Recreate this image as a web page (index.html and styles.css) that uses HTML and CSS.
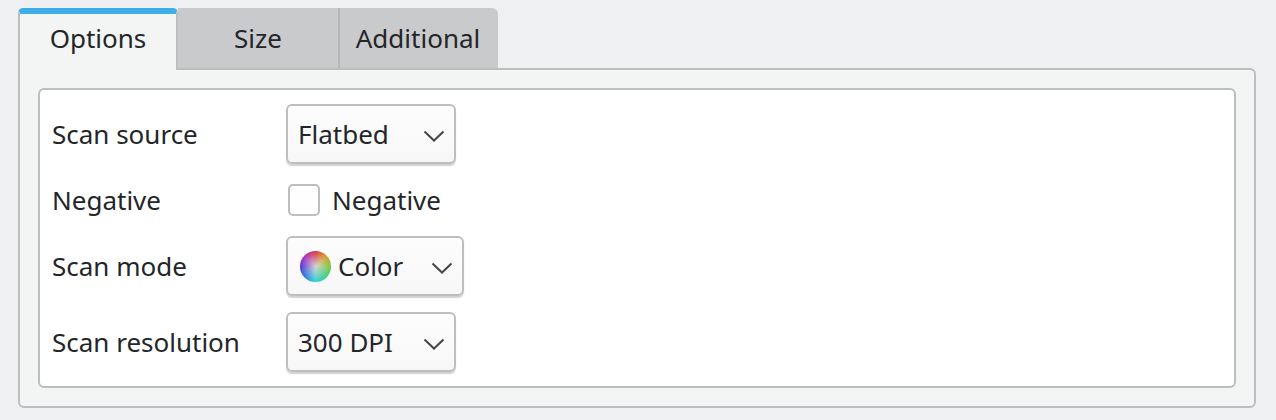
FILE: index.html
```html
<!DOCTYPE html>
<html lang="en">
<head>
    <meta charset="UTF-8">
    <title>Scan options</title>
    <link rel="stylesheet" href="styles.css">
</head>
<body>
    <div class="tabs">
        <div class="tab tab-active">Options</div>
        <div class="tab tab-size">Size</div>
        <div class="tab tab-additional">Additional</div>
    </div>
    <div class="pane">
        <div class="form-box">
            <div class="form-row row-source">
                <span class="form-label">Scan source</span>
                <div class="combo combo-source">
                    <span>Flatbed</span>
                    <svg class="chevron" viewBox="0 0 22 12"><path d="M1.5 1.5 L11 10.5 L20.5 1.5"/></svg>
                </div>
            </div>
            <div class="form-row row-negative">
                <span class="form-label">Negative</span>
                <label class="check"><span class="check-box"></span>Negative</label>
            </div>
            <div class="form-row row-mode">
                <span class="form-label">Scan mode</span>
                <div class="combo combo-mode">
                    <span class="color-wheel"></span>
                    <span>Color</span>
                    <svg class="chevron" viewBox="0 0 22 12"><path d="M1.5 1.5 L11 10.5 L20.5 1.5"/></svg>
                </div>
            </div>
            <div class="form-row row-resolution">
                <span class="form-label">Scan resolution</span>
                <div class="combo combo-source">
                    <span>300 DPI</span>
                    <svg class="chevron" viewBox="0 0 22 12"><path d="M1.5 1.5 L11 10.5 L20.5 1.5"/></svg>
                </div>
            </div>
        </div>
    </div>
</body>
</html>
```

FILE: styles.css
```css
html, body {
    height: 100%;
}
body {
    margin: 0;
    padding: 8px 20px 0 18px;
    box-sizing: border-box;
    overflow: hidden;
    background-color: #eff0f1;
    font-family: "Noto Sans", sans-serif;
    font-size: 26px;
    color: #232629;
}
.tabs {
    display: flex;
    height: 60px;
    position: relative;
    z-index: 1;
}
.tab {
    display: flex;
    align-items: center;
    justify-content: center;
    box-sizing: border-box;
    background-color: #c9cacc;
}
.tab-active {
    width: 160px;
    height: 62px;
    background-color: #f3f5f5;
    border-top: 6px solid #3daee9;
    border-left: 2px solid #bcbebf;
    border-right: 2px solid #bcbebf;
    border-radius: 5px 5px 0 0;
    padding-bottom: 8px;
}
.tab-size {
    width: 162px;
    border-right: 2px solid #b4b6b7;
}
.tab-additional {
    width: 158px;
    padding-right: 2px;
    border-radius: 0 6px 0 0;
}
.pane {
    box-sizing: border-box;
    height: 340px;
    background-color: #f3f5f5;
    border: 2px solid #bcbebf;
    border-radius: 0 6px 6px 6px;
    padding: 18px;
}
.form-box {
    box-sizing: border-box;
    height: 300px;
    background-color: #ffffff;
    border: 2px solid #bcbebf;
    border-radius: 6px;
    padding: 14px 0 0 12px;
}
.form-row {
    display: flex;
    align-items: center;
}
.row-source {
    height: 60px;
}
.row-negative {
    height: 66px;
    margin-top: 3px;
}
.row-mode {
    height: 66px;
}
.row-resolution {
    height: 66px;
    margin-top: 10px;
}
.form-label {
    width: 234px;
    flex-shrink: 0;
}
.combo {
    display: flex;
    align-items: center;
    box-sizing: border-box;
    height: 60px;
    background: linear-gradient(#fdfdfd, #f7f7f7);
    border: 2px solid #bcbebf;
    border-radius: 6px;
    box-shadow: 0 2px 1px rgba(0, 0, 0, 0.18);
    position: relative;
}
.combo-source {
    width: 170px;
    padding-left: 10px;
}
.combo-mode {
    width: 178px;
    padding-left: 12px;
}
.chevron {
    position: absolute;
    right: 9px;
    top: 24px;
    width: 22px;
    height: 12px;
    fill: none;
    stroke: #44474a;
    stroke-width: 2;
}
.color-wheel {
    width: 31px;
    height: 31px;
    margin-right: 7px;
    border-radius: 50%;
    background:
        radial-gradient(circle, rgba(215, 215, 215, 0.95) 0, rgba(215, 215, 215, 0.55) 30%, rgba(215, 215, 215, 0) 72%),
        conic-gradient(#d83040, #d89a20, #78c830, #30d080, #30d0d8, #2878e0, #5030d8, #b028b8, #d83040);
}
.check {
    display: flex;
    align-items: center;
    padding-left: 2px;
}
.check-box {
    box-sizing: border-box;
    width: 32px;
    height: 32px;
    margin-right: 12px;
    background-color: #fefefe;
    border: 2px solid #bcbebf;
    border-radius: 5px;
}
```
